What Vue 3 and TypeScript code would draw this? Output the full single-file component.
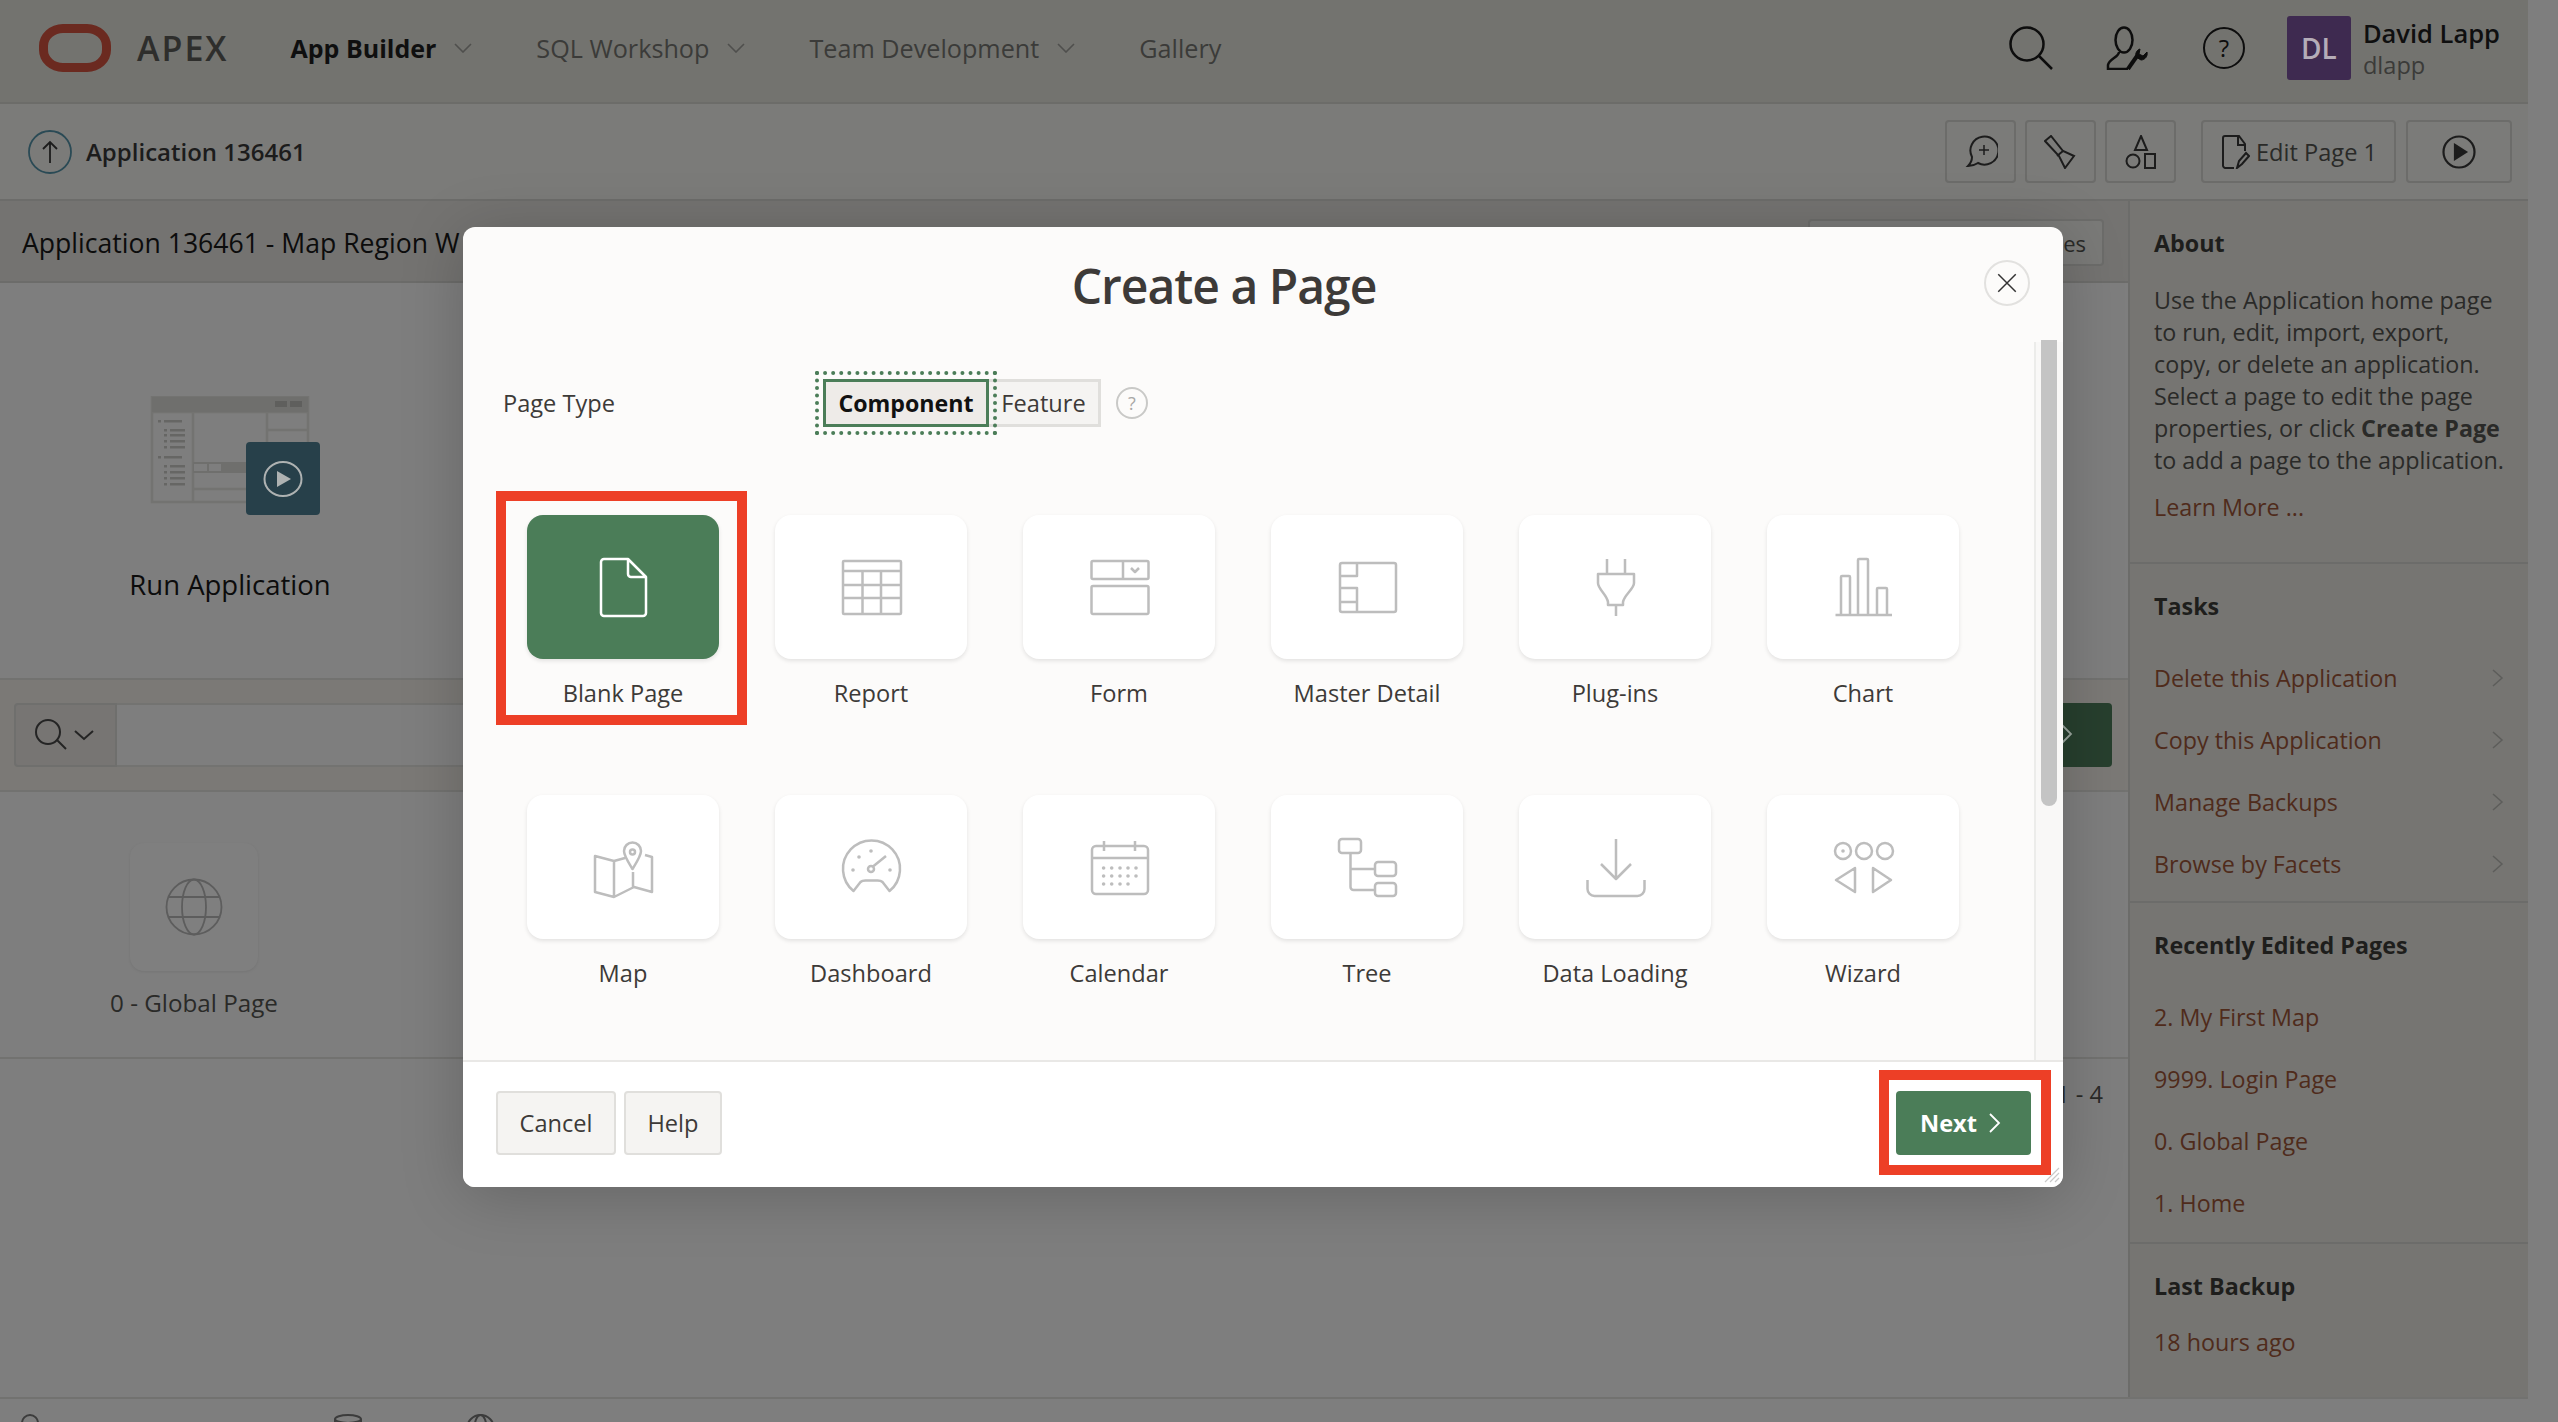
<script setup lang="ts">
// Create a Page dialog over the APEX application home
interface Tile {
  label: string;
  d: string;
  dots?: number[][];
  selected?: boolean;
}

const navItems = [
  { label: 'App Builder', active: true, menu: true },
  { label: 'SQL Workshop', active: false, menu: true },
  { label: 'Team Development', active: false, menu: true },
  { label: 'Gallery', active: false, menu: false },
];

const tasks = ['Delete this Application', 'Copy this Application', 'Manage Backups', 'Browse by Facets'];
const recentPages = ['2. My First Map', '9999. Login Page', '0. Global Page', '1. Home'];

const calendarDots: number[][] = [];
[33, 41, 49].forEach((y, row) => {
  [16.6, 24.7, 33, 41, 49].forEach((x, col) => {
    if (row < 2 || col < 4) calendarDots.push([x, y]);
  });
});

const tiles: Tile[] = [
  {
    label: 'Blank Page',
    selected: true,
    d: 'M37 4H13a3 3 0 0 0-3 3v51a3 3 0 0 0 3 3h39a3 3 0 0 0 3-3V22L37 4zM37 4v15a3 3 0 0 0 3 3h15',
  },
  {
    label: 'Report',
    d: 'M5 6h56a1 1 0 0 1 1 1v51a1 1 0 0 1-1 1H5a1 1 0 0 1-1-1V7a1 1 0 0 1 1-1zM4 16h58M4 30h58M4 43h58M23.500 16v43M42 16v43',
  },
  {
    label: 'Form',
    d: 'M6 6h54a1.500 1.500 0 0 1 1.500 1.500v15a1.500 1.500 0 0 1-1.500 1.500H6a1.500 1.500 0 0 1-1.500-1.500v-15A1.500 1.500 0 0 1 6 6zM36 6v18M44 13l4 4 4-4M6 31h54a1.500 1.500 0 0 1 1.500 1.500v25a1.500 1.500 0 0 1-1.500 1.500H6a1.500 1.500 0 0 1-1.500-1.500v-25A1.500 1.500 0 0 1 6 31z',
  },
  {
    label: 'Master Detail',
    d: 'M7 8h52a2 2 0 0 1 2 2v45a2 2 0 0 1-2 2H7a2 2 0 0 1-2-2V10a2 2 0 0 1 2-2zM22 8v13H5M5 33h17v24M5 47h17',
  },
  {
    label: 'Plug-ins',
    d: 'M24 4v15M42 4v15M15 19h36v9c0 6-10 12-11 19v3H25v-3c-1-7-10-13-10-19zM33 50v11',
  },
  {
    label: 'Chart',
    d: 'M4.500 60H61M10 60V22a1 1 0 0 1 1-1h7a1 1 0 0 1 1 1v38M27 60V5a1 1 0 0 1 1-1h8a1 1 0 0 1 1 1v55M46 60V34a1 1 0 0 1 1-1h8a1 1 0 0 1 1 1v27',
  },
  {
    label: 'Map',
    d: 'M34 23l-11 3-19-5v36l19 5 20-10 18 5V22l-7-2M23 26v36M42 37v15M41.500 34c-3-5-8.500-13-8.500-18a8.500 8.500 0 0 1 17 0c0 5-5.500 13-8.500 18zM44 17a2.500 2.500 0 1 1-5 0 2.500 2.500 0 0 1 5 0z',
  },
  {
    label: 'Dashboard',
    d: 'M14.500 56a28.500 28.500 0 1 1 36 0l-7-9c-1-1-3-1.500-5-1.500h-12c-2 0-4 .5-5 1.500zM35 34a3 3 0 1 1-6 0 3 3 0 0 1 6 0zM34 31.500L47 21',
    dots: [[20, 22], [32, 16], [14, 35], [51, 35]],
  },
  {
    label: 'Calendar',
    d: 'M9 11h48a4 4 0 0 1 4 4v40a4 4 0 0 1-4 4H9a4 4 0 0 1-4-4V15a4 4 0 0 1 4-4zM5 23h56M17 6v10M48 6v10',
    dots: calendarDots,
  },
  {
    label: 'Tree',
    d: 'M7 4h16a3 3 0 0 1 3 3v8a3 3 0 0 1-3 3H7a3 3 0 0 1-3-3V7a3 3 0 0 1 3-3zM43 27h15a3 3 0 0 1 3 3v8a3 3 0 0 1-3 3H43a3 3 0 0 1-3-3v-8a3 3 0 0 1 3-3zM43 48h15a3 3 0 0 1 3 3v7a3 3 0 0 1-3 3H43a3 3 0 0 1-3-3v-7a3 3 0 0 1 3-3zM15.500 18v34a3 3 0 0 0 3 3H40M15.500 34H40',
  },
  {
    label: 'Data Loading',
    d: 'M33 4v40M18 29l15 15 15-15M4.500 45v9a7 7 0 0 0 7 7h43a7 7 0 0 0 7-7v-9',
  },
  {
    label: 'Wizard',
    d: 'M20 16a8 8 0 1 1-16 0 8 8 0 0 1 16 0zM41 16a8 8 0 1 1-16 0 8 8 0 0 1 16 0zM62 16a8 8 0 1 1-16 0 8 8 0 0 1 16 0zM24 33L5 45l19 12zM42 33l18 12-18 12z',
    dots: [[12, 16]],
  },
];
</script>

<template>
  <div class="page">
    <div class="shell">
      <header class="topbar">
        <span class="logo"></span>
        <span class="brand">APEX</span>
        <nav class="nav">
          <a v-for="item in navItems" :key="item.label" class="nav-item" :class="{ active: item.active }">
            {{ item.label }}
            <svg v-if="item.menu" class="nav-chevron" viewBox="0 0 18 10" width="18" height="10" fill="none">
              <path d="M1 1l8 8 8-8" stroke="#4f4f4d" stroke-width="1.600" />
            </svg>
          </a>
        </nav>
        <div class="top-actions">
          <svg width="44" height="44" viewBox="0 0 44 44" fill="none" stroke="#0d0d0d" stroke-width="2.500">
            <circle cx="18" cy="18" r="16.500" />
            <path d="M30 30l13 13" />
          </svg>
          <svg width="44" height="44" viewBox="0 0 44 44" fill="none" stroke="#0d0d0d" stroke-width="2.500">
            <ellipse cx="18" cy="14" rx="8.500" ry="12.500" />
            <path d="M13 26c0 5-10 7-11 13v4h20" />
            <path d="M22 43l9-13" stroke-width="4" />
            <path d="M30 31c-1-4 1-7 4-8l-1 5 4 2 4-4c1 4-2 8-6 8z" fill="#0d0d0d" stroke-width="1" />
          </svg>
          <span class="top-help">?</span>
          <span class="avatar">DL</span>
          <div class="user">
            <span class="user-name">David Lapp</span>
            <span class="user-id">dlapp</span>
          </div>
        </div>
      </header>

      <div class="toolbar">
        <svg width="44" height="44" viewBox="0 0 44 44" fill="none" stroke="#2a4a55" stroke-width="1.800">
          <circle cx="22" cy="22" r="21" />
          <path d="M22 33V12M15 19l7-7 7 7" stroke="#1c1c1c" />
        </svg>
        <span class="toolbar-title">Application 136461</span>
        <div class="toolbar-actions">
          <button class="tool-btn">
            <svg width="34" height="34" viewBox="0 0 34 34" fill="none" stroke="#1c1c1c" stroke-width="2">
              <path d="M8 22a14 14 0 1 1 6 6c-3 2-6 3-10 3 2-2 4-5 4-9z" />
              <path d="M20 10v10M15 15h10" stroke-width="1.500" />
            </svg>
          </button>
          <button class="tool-btn">
            <svg width="34" height="34" viewBox="0 0 34 34" fill="none" stroke="#1c1c1c" stroke-width="2">
              <path d="M1 6l6-5 12 15 11 5-9 12-6-12zM19 16l-6 5" />
            </svg>
          </button>
          <button class="tool-btn">
            <svg width="34" height="34" viewBox="0 0 34 34" fill="none" stroke="#1c1c1c" stroke-width="2">
              <path d="M17 1l6 14H11zM21 19h10v14H21z" />
              <circle cx="9" cy="26" r="6.500" />
            </svg>
          </button>
          <button class="tool-btn edit-btn">
            <svg width="30" height="34" viewBox="0 0 30 34" fill="none" stroke="#1c1c1c" stroke-width="2">
              <path d="M14 33H5a3 3 0 0 1-2-2V3a2 2 0 0 1 2-2h14l6 8v7M18 1v9h7M17 33l2-7 7-8 3 3-7 8z" />
            </svg>
            Edit Page 1
          </button>
          <button class="tool-btn run-btn">
            <svg width="34" height="34" viewBox="0 0 34 34" fill="none" stroke="#1c1c1c" stroke-width="2.200">
              <circle cx="17" cy="17" r="15.500" />
              <path d="M13 10l11 7-11 7z" fill="#1c1c1c" />
            </svg>
          </button>
        </div>
      </div>

      <div class="workspace">
        <main class="main">
          <div class="title-bar">
            <h1 class="app-title">Application 136461 - Map Region W</h1>
            <button class="utilities-btn">Utilities</button>
          </div>

          <section class="run">
            <div class="run-card">
              <svg width="184" height="120" viewBox="0 0 184 120" fill="none">
                <path d="M14 16h156V1H14zM14 16v90h156V16" stroke="#737371" stroke-width="2.500" />
                <path d="M14 1h156v15H14z" fill="#6f6f6d" />
                <path d="M137 5h12v6h-12zM152 5h12v6h-12z" fill="#5f5f5d" />
                <path d="M55 16v90M129 16v50M129 34h41M55 93h60" stroke="#737371" stroke-width="2.500" />
                <path d="M55 66h53v11H55z" fill="#6f6f6d" />
                <path d="M56 68h13v7H56zM71 68h12v7H71z" fill="#7e7e7e" />
                <path d="M20 24h3v2.500h-3zM26 24h18v2.500H26zM26 33h3v2.500h-3zM32 33h15v2.500H32zM26 38h3v2.500h-3zM32 38h15v2.500H32zM26 44h3v2.500h-3zM32 44h15v2.500H32zM26 50h3v2.500h-3zM32 50h15v2.500H32zM20 60h3v2.500h-3zM26 60h18v2.500H26zM26 69h3v2.500h-3zM32 69h15v2.500H32zM26 75h3v2.500h-3zM32 75h15v2.500H32zM26 81h3v2.500h-3zM32 81h15v2.500H32zM26 87h3v2.500h-3zM32 87h15v2.500H32z" fill="#666664" />
              </svg>
              <span class="run-tile">
                <svg width="42" height="36" viewBox="0 0 42 36" fill="none">
                  <ellipse cx="21" cy="18" rx="18.500" ry="17" stroke="#aeb2b2" stroke-width="2" />
                  <path d="M15 10l14 8-14 8z" fill="#aeb2b2" />
                </svg>
              </span>
              <span class="run-label">Run Application</span>
            </div>
          </section>

          <div class="search-band">
            <div class="search-toggle">
              <svg width="36" height="32" viewBox="0 0 36 32" fill="none" stroke="#242424" stroke-width="2">
                <circle cx="14" cy="13" r="12" />
                <path d="M23 21l9 9" />
              </svg>
              <svg width="20" height="12" viewBox="0 0 20 12" fill="none" stroke="#242424" stroke-width="2">
                <path d="M1 2l9 8 9-8" />
              </svg>
            </div>
            <div class="search-input"></div>
            <button class="go-btn">
              <svg width="12" height="20" viewBox="0 0 12 20" fill="none" stroke="#9ca79f" stroke-width="1.800">
                <path d="M1 1l9 9-9 9" />
              </svg>
            </button>
          </div>

          <section class="page-grid">
            <div class="page-cell">
              <span class="page-tile">
                <svg width="58" height="58" viewBox="0 0 58 58" fill="none" stroke="#5d5d5d" stroke-width="1.800">
                  <circle cx="29" cy="29" r="27.500" />
                  <ellipse cx="29" cy="29" rx="12" ry="27.500" />
                  <path d="M3 19h52M3 39h52" />
                </svg>
              </span>
              <span class="page-label">0 - Global Page</span>
            </div>
          </section>

          <div class="pagination">1 - 4</div>
        </main>

        <aside class="side">
          <section class="side-block about">
            <h2 class="side-head">About</h2>
            <p class="side-text">
              Use the Application home page<br />
              to run, edit, import, export,<br />
              copy, or delete an application.<br />
              Select a page to edit the page<br />
              properties, or click <b>Create Page</b><br />
              to add a page to the application.
            </p>
            <a class="side-more">Learn More ...</a>
          </section>
          <section class="side-block tasks">
            <h2 class="side-head">Tasks</h2>
            <ul class="side-list">
              <li v-for="task in tasks" :key="task" class="side-item">
                {{ task }}
                <svg width="12" height="18" viewBox="0 0 12 18" fill="none" stroke="#5d5d5b" stroke-width="1.500">
                  <path d="M1 1l9 8-9 8" />
                </svg>
              </li>
            </ul>
          </section>
          <section class="side-block">
            <h2 class="side-head">Recently Edited Pages</h2>
            <ul class="side-list">
              <li v-for="name in recentPages" :key="name" class="side-item">{{ name }}</li>
            </ul>
          </section>
          <section class="side-block last">
            <h2 class="side-head">Last Backup</h2>
            <a class="side-more">18 hours ago</a>
          </section>
        </aside>
      </div>

      <footer class="footer">
        <svg width="18" height="18" viewBox="0 0 18 18" fill="none" stroke="#3c3c3c" stroke-width="2">
          <circle cx="9" cy="9" r="8" />
        </svg>
        <svg width="28" height="18" viewBox="0 0 28 18" fill="none" stroke="#3c3c3c" stroke-width="2">
          <ellipse cx="14" cy="5" rx="13" ry="4" />
          <path d="M1 5v13M27 5v13" />
        </svg>
        <svg width="29" height="18" viewBox="0 0 29 18" fill="none" stroke="#3c3c3c" stroke-width="2">
          <circle cx="14.500" cy="14.500" r="13.500" />
          <ellipse cx="14.500" cy="14.500" rx="6" ry="13.500" />
        </svg>
      </footer>
    </div>

    <!-- диалог поверх страницы -->
    <div class="modal">
      <div class="modal-head">
        <h2 class="modal-title">Create a Page</h2>
        <button class="modal-close">
          <svg width="20" height="20" viewBox="0 0 16 16" fill="none" stroke="#333" stroke-width="1.200">
            <path d="M1 1l14 14M15 1L1 15" />
          </svg>
        </button>
      </div>

      <div class="modal-body">
        <div class="modal-content">
          <div class="form-row">
            <span class="form-label">Page Type</span>
            <div class="segments">
              <span class="seg seg-on">Component</span>
              <span class="seg seg-off">Feature</span>
            </div>
            <span class="form-help">?</span>
          </div>

          <div class="tile-grid">
            <div v-for="tile in tiles" :key="tile.label" class="tile-cell">
              <span v-if="tile.selected" class="mark mark-tile"></span>
              <span class="tile" :class="{ 'tile-on': tile.selected }">
                <svg width="64" height="64" viewBox="0 0 64 64" fill="none">
                  <path :d="tile.d" class="tile-line" />
                  <circle v-for="(dot, i) in tile.dots" :key="i" :cx="dot[0]" :cy="dot[1]" r="1.800" class="tile-dot" />
                </svg>
              </span>
              <span class="tile-label">{{ tile.label }}</span>
            </div>
          </div>
        </div>
        <div class="modal-track"><span class="modal-thumb"></span></div>
      </div>

      <div class="modal-foot">
        <button class="foot-btn cancel">Cancel</button>
        <button class="foot-btn help">Help</button>
        <div class="next-wrap">
          <span class="mark mark-next"></span>
          <button class="next-btn">
            Next
            <svg width="12" height="20" viewBox="0 0 12 20" fill="none" stroke="#fff" stroke-width="1.800">
              <path d="M1 1l9 9-9 9" />
            </svg>
          </button>
        </div>
      </div>

      <svg class="resize" width="16" height="16" viewBox="0 0 16 16" fill="none" stroke="#c9c9c9" stroke-width="1.200">
        <path d="M1 15L15 1M6 15L15 6M11 15l4-4" />
      </svg>
    </div>
  </div>
</template>

<style scoped>
.page {
  position: relative;
  width: 2558px;
  height: 1422px;
  overflow: hidden;
  background: #7e7e7e;
  font-family: "Open Sans", "Noto Sans", sans-serif;
  font-size: 23.600px;
  line-height: 32px;
  color: #2a2a28;
}

.shell {
  width: 2528px;
  height: 1422px;
  display: flex;
  flex-direction: column;
}

/* Шапка */
.topbar {
  flex: none;
  height: 104px;
  box-sizing: border-box;
  display: flex;
  align-items: center;
  padding: 0 28px 6px 39px;
  background: #73736f;
  border-bottom: 2px solid #6c6c69;
}

.logo {
  width: 72px;
  height: 48px;
  box-sizing: border-box;
  border: 9px solid #6b2a20;
  border-radius: 24px / 22px;
}

.brand {
  margin-left: 26px;
  font-size: 34px;
  font-weight: 600;
  letter-spacing: 2px;
  color: #2e2e2c;
}

.nav {
  display: flex;
  gap: 64px;
  margin-left: 62px;
}

.nav-item {
  display: flex;
  align-items: center;
  gap: 18px;
  font-size: 25.200px;
  color: #3b3b39;
}

.nav-item.active {
  font-weight: 700;
  font-size: 25px;
  color: #0f0f0f;
}

.top-actions {
  margin-left: auto;
  display: flex;
  align-items: center;
  gap: 53px;
}

.top-help {
  width: 42px;
  height: 42px;
  box-sizing: border-box;
  border: 2.500px solid #0d0d0d;
  border-radius: 50%;
  display: flex;
  align-items: center;
  justify-content: center;
  font-size: 24px;
  color: #0d0d0d;
}

.avatar {
  width: 64px;
  height: 64px;
  margin-left: -11px;
  border-radius: 3px;
  background: #3e2a50;
  color: #b5adb8;
  font-size: 28px;
  font-weight: 600;
  display: flex;
  align-items: center;
  justify-content: center;
}

.user {
  margin-left: -41px;
  display: flex;
  flex-direction: column;
}

.user-name {
  padding-top: 2px;
  font-size: 25.500px;
  font-weight: 600;
  color: #0f0f0f;
}

.user-id {
  color: #3b3b39;
}

/* Панель приложения */
.toolbar {
  flex: none;
  height: 97px;
  box-sizing: border-box;
  display: flex;
  align-items: center;
  padding: 0 16px 0 28px;
  background: #7b7b79;
  border-bottom: 2px solid #6c6c6a;
}

.toolbar-title {
  margin-left: 14px;
  font-size: 24px;
  font-weight: 600;
  color: #1c1c1c;
}

.toolbar-actions {
  margin-left: auto;
  display: flex;
  gap: 9px;
}

.tool-btn {
  width: 71px;
  height: 63px;
  display: flex;
  align-items: center;
  justify-content: center;
  gap: 6px;
  border: 2px solid #6c6c6a;
  border-radius: 4px;
  background: #7b7b79;
  font: inherit;
  color: #2a2a28;
}

.edit-btn {
  width: 195px;
  margin-left: 16px;
}

.run-btn {
  width: 106px;
  margin-left: 1px;
}

.workspace {
  flex: 1;
  display: flex;
  min-height: 0;
}

.main {
  flex: 1;
  min-width: 0;
  display: flex;
  flex-direction: column;
  overflow: hidden;
}

.title-bar {
  flex: none;
  height: 82px;
  box-sizing: border-box;
  display: flex;
  align-items: center;
  justify-content: space-between;
  padding: 3px 24px 0 22px;
  background: #747371;
  border-bottom: 2px solid #6c6c6a;
}

.app-title {
  margin: 0;
  font-size: 26.600px;
  font-weight: 400;
  color: #0c0c0c;
  white-space: nowrap;
}

.utilities-btn {
  width: 296px;
  height: 47px;
  padding: 0 16px 0 0;
  text-align: right;
  border: 2px solid #6c6c6a;
  border-radius: 4px;
  background: #7a7a78;
  font: inherit;
  font-size: 22px;
  color: #2a2a28;
}

.run {
  flex: none;
  height: 395px;
}

.run-card {
  position: relative;
  width: 460px;
  padding-top: 113px;
  display: flex;
  flex-direction: column;
  align-items: center;
}

.run-tile {
  position: absolute;
  left: 246px;
  top: 159px;
  width: 74px;
  height: 73px;
  border-radius: 4px;
  background: #27404a;
  display: flex;
  align-items: center;
  justify-content: center;
}

.run-label {
  margin-top: 49px;
  font-size: 27.500px;
  line-height: 40px;
  color: #0c0c0c;
}

.search-band {
  flex: none;
  height: 114px;
  box-sizing: border-box;
  display: flex;
  align-items: center;
  padding: 0 16px 0 14px;
  background: #7b7976;
  border-top: 2px solid #727270;
  border-bottom: 2px solid #727270;
}

.search-toggle {
  width: 103px;
  height: 64px;
  box-sizing: border-box;
  display: flex;
  align-items: center;
  justify-content: center;
  gap: 4px;
  padding-right: 4px;
  background: #777573;
  border: 2px solid #6f6f6d;
  border-radius: 4px 0 0 4px;
}

.search-input {
  flex: 1;
  height: 64px;
  box-sizing: border-box;
  background: #7e7e7e;
  border: 2px solid #737371;
  border-left: 0;
}

.go-btn {
  width: 120px;
  height: 64px;
  padding: 0 0 0 30px;
  border: 0;
  border-radius: 0 4px 4px 0;
  background: #273f2e;
}

.page-grid {
  flex: none;
  height: 267px;
  box-sizing: border-box;
  padding-top: 51px;
  border-bottom: 2px solid #727270;
}

.page-cell {
  width: 388px;
  display: flex;
  flex-direction: column;
  align-items: center;
}

.page-tile {
  width: 128px;
  height: 128px;
  border-radius: 14px;
  background: #7f7f7f;
  box-shadow: 0 1px 3px rgba(0, 0, 0, .08);
  display: flex;
  align-items: center;
  justify-content: center;
}

.page-label {
  margin-top: 16px;
  font-size: 24.200px;
}

.pagination {
  padding: 19px 25px 0 0;
  text-align: right;
}

/* Боковая панель */
.side {
  flex: none;
  width: 400px;
  box-sizing: border-box;
  background: #767572;
  border-left: 2px solid #6c6c6a;
  font-size: 23.300px;
}

.side-block {
  padding: 26px 24px 8px;
  border-bottom: 2px solid #6c6c6a;
}

.side-block.about {
  padding-bottom: 39px;
}

.side-block.tasks {
  padding-bottom: 6px;
}

.side-block.last {
  border-bottom: 0;
}

.side-block.last .side-more {
  margin-top: 24px;
}

.side-head {
  margin: 0;
  font-size: 23.300px;
  line-height: 32px;
  font-weight: 700;
  color: #1e1e1c;
}

.side-text {
  margin: 25px 0 0;
}

.side-more {
  display: block;
  margin-top: 15px;
  color: #4f2b1b;
}

.side-list {
  list-style: none;
  margin: 25px 0 0;
  padding: 0;
}

.side-item {
  height: 62px;
  display: flex;
  align-items: center;
  justify-content: space-between;
  color: #4f2b1b;
}

/* Диалог */
.modal {
  position: absolute;
  left: 463px;
  top: 227px;
  width: 1600px;
  height: 960px;
  display: flex;
  flex-direction: column;
  border-radius: 12px;
  background: #fcfbfa;
  box-shadow: 0 8px 64px rgba(0, 0, 0, .2);
  color: #3d3a38;
}

.modal-head {
  position: relative;
  flex: none;
  height: 115px;
  display: flex;
  justify-content: center;
  align-items: flex-start;
}

.modal-title {
  margin: 27px 78px 0 0;
  font-size: 48px;
  line-height: 64px;
  font-weight: 600;
  letter-spacing: -1px;
}

.modal-close {
  position: absolute;
  right: 33px;
  top: 33px;
  width: 46px;
  height: 46px;
  padding: 0;
  border: 2px solid #e2e1df;
  border-radius: 50%;
  background: #fcfbfa;
  display: flex;
  align-items: center;
  justify-content: center;
}

.modal-body {
  flex: 1;
  min-height: 0;
  display: flex;
}

.modal-content {
  flex: 1;
  padding-top: 37px;
}

.modal-track {
  flex: none;
  width: 29px;
  box-sizing: border-box;
  padding: 0 7px 0 5px;
  background: #f9f8f7;
  border-left: 2px solid #ececea;
}

.modal-thumb {
  display: block;
  width: 16px;
  height: 466px;
  margin-top: -2px;
  border-radius: 0 0 8px 8px;
  background: #c4c4c4;
}

.form-row {
  display: flex;
  align-items: center;
  height: 48px;
  padding-left: 40px;
}

.form-label {
  width: 320px;
}

.segments {
  display: flex;
  position: relative;
}

.seg {
  height: 48px;
  box-sizing: border-box;
  display: flex;
  align-items: center;
  justify-content: center;
  border-style: solid;
  border-width: 3px;
}

.seg-on {
  position: relative;
  width: 166px;
  border-color: #4b7d58;
  background: #eeebe8;
  font-size: 23.200px;
  font-weight: 700;
  color: #111;
  outline: 4px dotted #4b7d58;
  outline-offset: 4px;
}

.seg-off {
  width: 112px;
  border-color: #e0dfdc;
  border-left: 0;
  background: #f5f4f2;
}

.form-help {
  width: 32px;
  height: 32px;
  box-sizing: border-box;
  margin-left: 15px;
  border: 2px solid #c9c9c7;
  border-radius: 50%;
  display: flex;
  align-items: center;
  justify-content: center;
  font-size: 18px;
  color: #a8a8a6;
}

.tile-grid {
  display: grid;
  grid-template-columns: repeat(6, 248px);
  row-gap: 86px;
  margin-top: 88px;
  padding-left: 36px;
}

.tile-cell {
  position: relative;
  display: flex;
  flex-direction: column;
  align-items: center;
}

.tile {
  width: 192px;
  height: 144px;
  border-radius: 16px;
  background: #fff;
  box-shadow: 0 2px 4px rgba(0, 0, 0, .1);
  display: flex;
  align-items: center;
  justify-content: center;
}

.tile-line {
  stroke: #bdbdbd;
  stroke-width: 2.500;
  stroke-linejoin: round;
}

.tile-dot {
  fill: #bdbdbd;
}

.tile-on {
  background: #4b7d58;
}

.tile-on .tile-line {
  stroke: #fff;
}

.tile-label {
  margin-top: 18px;
}

.mark {
  position: absolute;
  border: 10px solid #ed3f26;
  pointer-events: none;
}

.mark-tile {
  left: -3px;
  right: 0;
  top: -24px;
  bottom: -16px;
}

.mark-next {
  left: -17px;
  right: -20px;
  top: -21px;
  bottom: -20px;
}

.modal-foot {
  flex: none;
  height: 127px;
  box-sizing: border-box;
  display: flex;
  align-items: flex-start;
  gap: 8px;
  padding: 29px 32px 0 33px;
  background: #fff;
  border-top: 2px solid #e9e8e6;
  border-radius: 0 0 12px 12px;
}

.foot-btn {
  height: 64px;
  padding: 0;
  border: 2px solid #e0dfdc;
  border-radius: 4px;
  background: #f5f4f2;
  font: inherit;
  color: #3d3a38;
}

.cancel {
  width: 120px;
}

.help {
  width: 98px;
}

.next-wrap {
  position: relative;
  margin-left: auto;
}

.next-btn {
  width: 135px;
  height: 64px;
  padding: 0 6px 0 0;
  border: 0;
  border-radius: 4px;
  background: #4b7d58;
  font: inherit;
  font-weight: 700;
  color: #fff;
  display: flex;
  align-items: center;
  justify-content: center;
  gap: 12px;
}

.resize {
  position: absolute;
  right: 3px;
  bottom: 4px;
}

.footer {
  flex: none;
  height: 25px;
  box-sizing: border-box;
  overflow: hidden;
  display: flex;
  align-items: flex-start;
  padding: 15px 0 0 21px;
  background: #7e7e7e;
  border-top: 2px solid #727270;
}

.footer svg:nth-child(2) {
  margin-left: 295px;
}

.footer svg:nth-child(3) {
  margin-left: 104px;
}
</style>
